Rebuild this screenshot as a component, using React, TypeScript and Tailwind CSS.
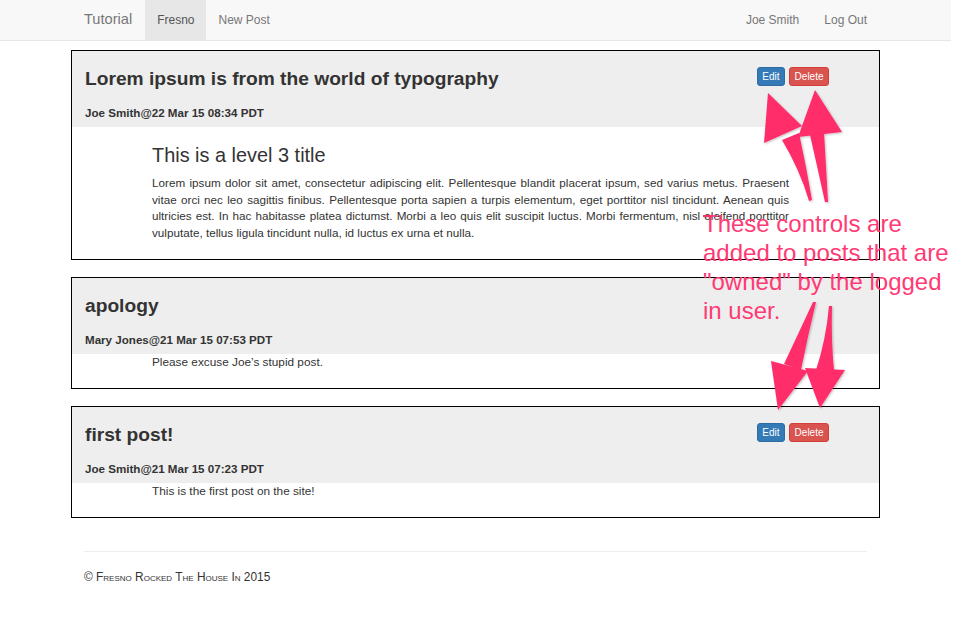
import React from "react";

type Post = {
  title: string;
  meta: string;
  owned: boolean;
  body: React.ReactNode;
};

function Btn({ label, color }: { label: string; color: "blue" | "red" }) {
  return (
    <div
      className={
        color === "blue"
          ? "h-[19px] px-[4.5px] flex items-center rounded-[3px] border border-[#2e6da4] bg-[#337ab7] text-white text-[10px] leading-none"
          : "h-[19px] px-[4.5px] flex items-center rounded-[3px] border border-[#d43f3a] bg-[#d9534f] text-white text-[10px] leading-none"
      }
    >
      {label}
    </div>
  );
}

function PostBox({ post }: { post: Post }) {
  return (
    <div className="border border-black mb-[17px]">
      <div className="bg-[#eee] flex h-[76px]">
        <div className="flex-1 pl-[13px] pt-[17px]">
          <h3 className="text-[19.2px] font-bold leading-[21px] text-[#333]">{post.title}</h3>
          <h5 className="mt-[16px] text-[11.6px] font-bold leading-[16px] text-[#333]">{post.meta}</h5>
        </div>
        {post.owned && (
          <div className="pt-[16px] pr-[50px] flex gap-[4px] items-start">
            <Btn label="Edit" color="blue" />
            <Btn label="Delete" color="red" />
          </div>
        )}
      </div>
      <div className="pl-[80px] pb-[18px]">{post.body}</div>
    </div>
  );
}

const justLine = "whitespace-nowrap text-justify [text-align-last:justify]";

const posts: Post[] = [
  {
    title: "Lorem ipsum is from the world of typography",
    meta: "Joe Smith@22 Mar 15 08:34 PDT",
    owned: true,
    body: (
      <div className="w-[637px]">
        <h3 className="mt-[16px] mb-[8px] text-[19.9px] leading-[24px] text-[#333]">This is a level 3 title</h3>
        <div className="text-[11.7px] leading-[16.6px] text-[#333]">
          <div className={justLine}>
            Lorem ipsum dolor sit amet, consectetur adipiscing elit. Pellentesque blandit placerat ipsum, sed varius metus. Praesent
          </div>
          <div className={justLine}>
            vitae orci nec leo sagittis finibus. Pellentesque porta sapien a turpis elementum, eget porttitor nisl tincidunt. Aenean quis
          </div>
          <div className={justLine}>
            ultricies est. In hac habitasse platea dictumst. Morbi a leo quis elit suscipit luctus. Morbi fermentum, nisl eleifend porttitor
          </div>
          <div className="whitespace-nowrap">vulputate, tellus ligula tincidunt nulla, id luctus ex urna et nulla.</div>
        </div>
      </div>
    ),
  },
  {
    title: "apology",
    meta: "Mary Jones@21 Mar 15 07:53 PDT",
    owned: false,
    body: <div className="text-[11.8px] leading-[16px] text-[#333]">Please excuse Joe’s stupid post.</div>,
  },
  {
    title: "first post!",
    meta: "Joe Smith@21 Mar 15 07:23 PDT",
    owned: true,
    body: <div className="text-[11.8px] leading-[16px] text-[#333]">This is the first post on the site!</div>,
  },
];

export default function App() {
  const pink = "#ff2d6b";
  return (
    <div className="relative w-[951px] h-[630px] bg-white font-['Liberation_Sans',Arial,sans-serif] text-[#333]">
      <nav className="h-[41px] bg-[#f8f8f8] border-b border-[#e7e7e7]">
        <div className="w-[809px] mx-auto h-[40px] flex items-stretch text-[12px] text-[#777]">
          <div className="flex items-center pl-[13px] pr-[12px] text-[14.6px]">Tutorial</div>
          <div className="ml-[1px] flex items-center px-[12px] bg-[#e7e7e7] text-[#555]">Fresno</div>
          <div className="flex items-center px-[12px]">New Post</div>
          <div className="ml-auto flex items-center pl-[12px] pr-[13px]">Joe Smith</div>
          <div className="flex items-center pl-[12px] pr-[13px]">Log Out</div>
        </div>
      </nav>
      <main className="w-[809px] mx-auto pt-[9px]">
        {posts.map((p) => (
          <PostBox key={p.title} post={p} />
        ))}
        <footer className="mt-[33px] mx-[13px] border-t border-[#eee] pt-[17px]">
          <p className="text-[11.9px] leading-[16px] text-[#333] [font-variant:small-caps]">
            © Fresno Rocked The House In 2015
          </p>
        </footer>
      </main>

      <div className="absolute left-[703px] top-[209px] text-[24px] leading-[29px] text-[#ff3a74] whitespace-nowrap">
        <div>These controls are</div>
        <div>added to posts that are</div>
        <div>"owned" by the logged</div>
        <div>in user.</div>
      </div>

      <svg
        className="absolute left-0 top-0 pointer-events-none"
        width="951"
        height="630"
        viewBox="0 0 951 630"
      >
        <defs>
          <filter id="sh" x="-20%" y="-20%" width="140%" height="140%">
            <feDropShadow dx="1" dy="1" stdDeviation="1" floodColor="#000" floodOpacity="0.25" />
          </filter>
        </defs>
        <g fill={pink} filter="url(#sh)">
          {/* group 1 */}
          <path d="M782,140 Q800,170 809,201 L812,200 Q806,165 799,133 Z" />
          <path d="M768,93 L802,126 L764,143 Z" />
          <path d="M810,135 Q818,170 825,202 L828,202 Q826,165 824,133 Z" />
          <path d="M815,90 L842,132 L798,137 Z" />
          {/* group 2 */}
          <path d="M813,302 Q800,330 784,364 L801,370 Q808,335 816,302 Z" />
          <path d="M771,361 L808,371 L778,410 Z" />
          <path d="M829,306 Q826,340 816,370 L834,370 Q831,340 832,306 Z" />
          <path d="M805,368 L845,370 L820,408 Z" />
          <rect x="703" y="215" width="7" height="2" />
        </g>
      </svg>
    </div>
  );
}
